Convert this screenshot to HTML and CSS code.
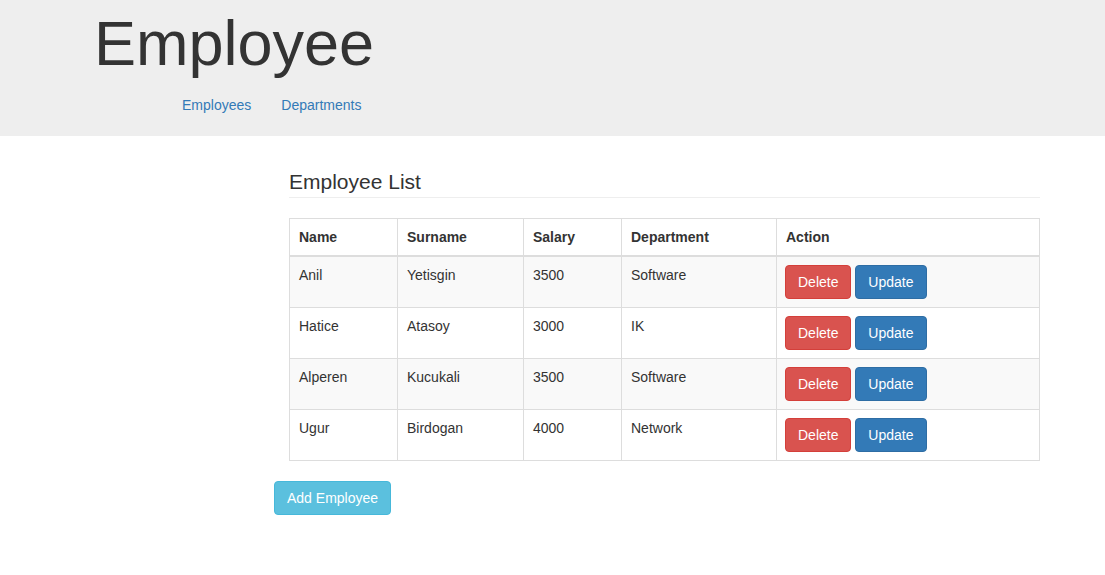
FILE: index.html
```html
<!DOCTYPE html>
<html>
<head>
<meta charset="utf-8">
<title>Employee</title>
<link rel="stylesheet" href="styles.css">
</head>
<body>
<header class="jumbotron">
  <h1 class="title">Employee</h1>
  <nav class="nav">
    <a class="nav-link" href="#">Employees</a>
    <a class="nav-link" href="#">Departments</a>
  </nav>
</header>
<main class="content">
  <section class="list">
    <h3 class="page-header">Employee List</h3>
    <table class="table">
      <colgroup>
        <col class="c-name"><col class="c-surname"><col class="c-salary"><col class="c-dept"><col class="c-action">
      </colgroup>
      <thead>
        <tr><th>Name</th><th>Surname</th><th>Salary</th><th>Department</th><th>Action</th></tr>
      </thead>
      <tbody>
        <tr class="odd"><td>Anil</td><td>Yetisgin</td><td>3500</td><td>Software</td><td><button class="btn btn-danger">Delete</button> <button class="btn btn-primary">Update</button></td></tr>
        <tr><td>Hatice</td><td>Atasoy</td><td>3000</td><td>IK</td><td><button class="btn btn-danger">Delete</button> <button class="btn btn-primary">Update</button></td></tr>
        <tr class="odd"><td>Alperen</td><td>Kucukali</td><td>3500</td><td>Software</td><td><button class="btn btn-danger">Delete</button> <button class="btn btn-primary">Update</button></td></tr>
        <tr><td>Ugur</td><td>Birdogan</td><td>4000</td><td>Network</td><td><button class="btn btn-danger">Delete</button> <button class="btn btn-primary">Update</button></td></tr>
      </tbody>
    </table>
  </section>
  <button class="btn btn-info">Add Employee</button>
</main>
</body>
</html>
```

FILE: styles.css
```css
* { box-sizing: border-box; }
html, body { margin: 0; padding: 0; }
body {
  font-family: "Liberation Sans", Arial, Helvetica, sans-serif;
  font-size: 14px;
  line-height: 20px;
  color: #333;
  background: #fff;
}
.jumbotron {
  background: #eee;
  padding: 9px 0 11px 94px;
  height: 136px;
}
.title {
  margin: 0;
  font-size: 63px;
  font-weight: 500;
  line-height: 69px;
  height: 69px;
}
.nav {
  display: flex;
  margin: 7px 0 0 73px;
  height: 40px;
}
.nav-link {
  display: block;
  padding: 10px 15px;
  color: #337ab7;
  text-decoration: none;
}
.content {
  padding-left: 274px;
}
.list {
  margin-left: 15px;
  width: 751px;
}
.page-header {
  margin: 34px 0 20px 0;
  font-size: 21px;
  font-weight: 500;
  line-height: 23px;
  padding-bottom: 4px;
  border-bottom: 1px solid #eee;
}
.table {
  width: 750px;
  border-collapse: collapse;
  table-layout: fixed;
  border: 1px solid #ddd;
  margin-bottom: 20px;
}
.c-name { width: 108px; }
.c-surname { width: 126px; }
.c-salary { width: 98px; }
.c-dept { width: 155px; }
.c-action { width: 263px; }
.table th, .table td {
  padding: 8px 8px 8px 9px;
  text-align: left;
  vertical-align: top;
  border: 1px solid #ddd;
  line-height: 20px;
}
.table td:last-child { padding-left: 8px; }
.table th {
  font-weight: bold;
  border-bottom: 2px solid #ddd;
  vertical-align: bottom;
}
.table tr.odd td { background: #f9f9f9; }
.btn {
  display: inline-block;
  font-family: inherit;
  font-size: 14px;
  line-height: 20px;
  padding: 6px 12px;
  border: 1px solid transparent;
  border-radius: 4px;
  color: #fff;
  cursor: pointer;
  vertical-align: middle;
  margin: 0;
}
.btn-danger { background: #d9534f; border-color: #d43f3a; }
.btn-primary { background: #337ab7; border-color: #2e6da4; }
.btn-info { background: #5bc0de; border-color: #46b8da; }
```
